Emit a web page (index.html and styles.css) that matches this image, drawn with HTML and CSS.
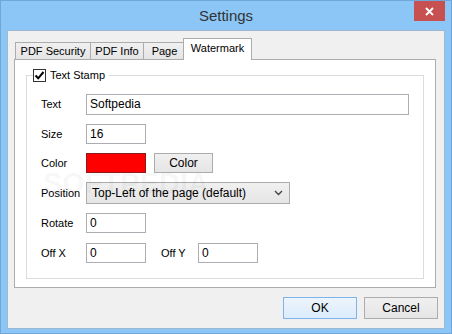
FILE: index.html
```html
<!DOCTYPE html>
<html lang="en">
<head>
    <meta charset="UTF-8">
    <title>Settings</title>
    <link rel="stylesheet" href="styles.css">
</head>
<body>
    <div class="window">
        <div class="titlebar">
            <span></span>
            <span class="title">Settings</span>
            <button class="close" aria-label="Close">
                <svg width="9" height="9" viewBox="0 0 9 9"><path d="M1 1L8 8M8 1L1 8" stroke="#fff" stroke-width="1.8"/></svg>
            </button>
        </div>

        <div class="client">
            <div class="tabs">
                <div class="tab tab-security">PDF Security</div>
                <div class="tab tab-info">PDF Info</div>
                <div class="tab tab-page">Page</div>
                <div class="tab active">Watermark</div>
            </div>

            <div class="panel">
                <fieldset class="group">
                    <legend>
                        <span class="check">
                            <svg width="11" height="11" viewBox="0 0 11 11"><path d="M1.5 5.5L4.2 8.3L9.5 2" fill="none" stroke="#000" stroke-width="2"/></svg>
                        </span>
                        Text Stamp
                    </legend>

                    <div class="row">
                        <label>Text</label>
                        <div class="input wide">Softpedia</div>
                    </div>
                    <div class="row">
                        <label>Size</label>
                        <div class="input">16</div>
                    </div>
                    <div class="row row-color">
                        <label>Color</label>
                        <div class="swatch"></div>
                        <button class="btn small">Color</button>
                    </div>
                    <div class="row">
                        <label>Position</label>
                        <div class="select">
                            <span>Top-Left of the page (default)</span>
                            <svg width="9" height="6" viewBox="0 0 9 6"><path d="M1 1L4.5 4.5L8 1" fill="none" stroke="#444" stroke-width="1.4"/></svg>
                        </div>
                    </div>
                    <div class="row">
                        <label>Rotate</label>
                        <div class="input">0</div>
                    </div>
                    <div class="row row-off">
                        <label>Off X</label>
                        <div class="input">0</div>
                        <label class="label-y">Off Y</label>
                        <div class="input">0</div>
                    </div>
                </fieldset>
                <div class="stamp">SOFTPEDIA<sup>®</sup></div>
            </div>

            <div class="footer">
                <button class="btn default">OK</button>
                <button class="btn">Cancel</button>
            </div>
        </div>
    </div>
</body>
</html>
```

FILE: styles.css
```css
body {
    margin: 0;
    font-family: "Liberation Sans", Arial, sans-serif;
    font-size: 11px;
    color: #000;
}
.window {
    width: 452px;
    height: 334px;
    box-sizing: border-box;
    background-color: #8bc6f6;
    border: 1px solid #6fa7da;
}
.titlebar {
    height: 29px;
    display: grid;
    grid-template-columns: 1fr auto 1fr;
    align-items: start;
}
.title {
    font-size: 15px;
    color: #333;
    line-height: 29px;
}
.close {
    justify-self: end;
    margin-right: 6px;
    width: 31px;
    height: 20px;
    border: none;
    padding: 0;
    background-color: #c75050;
    display: flex;
    align-items: center;
    justify-content: center;
}
.client {
    margin: 0 6px;
    height: 299px;
    box-sizing: border-box;
    border: 1px solid #9db8d0;
    background-color: #f0f0f0;
    display: flex;
    flex-direction: column;
}
.tabs {
    display: flex;
    align-items: flex-end;
    margin-top: 7px;
    padding-left: 7px;
    height: 21px;
}
.tab {
    height: 17px;
    box-sizing: border-box;
    border: 1px solid #acacac;
    border-bottom: none;
    background: linear-gradient(#f0f0f0, #e5e5e5);
    line-height: 16px;
    text-align: center;
    margin-left: -1px;
}
.tab-security {
    width: 76px;
    margin-left: 0;
}
.tab-info {
    width: 54px;
}
.tab-page {
    width: 43px;
}
.tab.active {
    width: 69px;
    height: 22px;
    margin: 0 0 -1px -3px;
    background: #fff;
    position: relative;
    z-index: 1;
    line-height: 19px;
}
.panel {
    margin: 0 8px 0 6px;
    height: 229px;
    box-sizing: border-box;
    border: 1px solid #acacac;
    background-color: #fff;
    display: flex;
    position: relative;
}
.group {
    flex: 1;
    margin: 8px 11px 8px 11px;
    padding: 11px 0 0 14px;
    border: 1px solid #dcdcdc;
    min-width: 0;
}
.group legend {
    display: flex;
    align-items: center;
    gap: 4px;
    padding: 0 4px 0 0;
    margin-left: -8px;
    height: 14px;
}
.check {
    width: 11px;
    height: 11px;
    border: 1px solid #333;
    background-color: #fff;
    display: flex;
    align-items: center;
    justify-content: center;
}
.row {
    display: flex;
    align-items: center;
    height: 22px;
    margin-bottom: 8px;
}
.row label {
    width: 45px;
}
.row-color {
    margin-top: -1px;
}
.row-off {
    margin-top: 3px;
}
.row .label-y {
    width: 37px;
    margin-left: 15px;
}
.input {
    width: 60px;
    height: 20px;
    box-sizing: border-box;
    border: 1px solid #abadb3;
    padding-left: 3px;
    line-height: 18px;
    font-size: 12px;
}
.input.wide {
    width: 323px;
    height: 21px;
}
.swatch {
    width: 60px;
    height: 20px;
    box-sizing: border-box;
    background-color: #ff0000;
    border: 1px solid #8c1c1c;
}
.btn {
    font-family: inherit;
    font-size: 12px;
    width: 74px;
    height: 22px;
    border: 1px solid #acacac;
    background: linear-gradient(#f0f0f0, #e5e5e5);
    padding: 0;
    color: #000;
}
.btn.small {
    width: 59px;
    height: 20px;
    margin-left: 8px;
}
.select {
    width: 204px;
    height: 22px;
    box-sizing: border-box;
    border: 1px solid #acacac;
    background: linear-gradient(#f0f0f0, #e5e5e5);
    display: flex;
    align-items: center;
    justify-content: space-between;
    padding: 0 6px 0 5px;
    font-size: 12px;
}
/* faint watermark over the form */
.stamp {
    position: absolute;
    left: 28px;
    top: 109px;
    font-size: 29px;
    font-weight: bold;
    line-height: 1;
    color: rgba(0, 0, 0, 0.045);
    pointer-events: none;
}
.stamp sup {
    font-size: 9px;
    vertical-align: top;
}
.footer {
    flex: 1;
    display: flex;
    justify-content: flex-end;
    align-items: flex-start;
    gap: 7px;
    padding: 9px 6px 0 0;
}
.btn.default {
    border-color: #7eb4ea;
    background: linear-gradient(#ecf4fc, #dcecfc);
}
```
